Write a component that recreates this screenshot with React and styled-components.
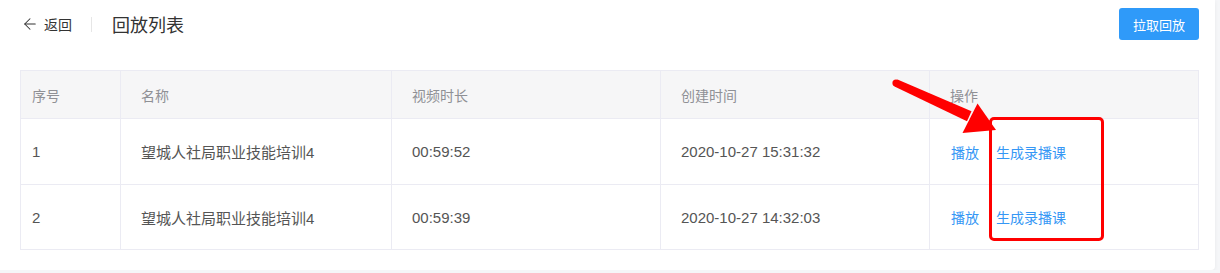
import { createGlobalStyle, styled } from "styled-components";
import { ArrowLeft } from "lucide-react";

const GlobalStyle = createGlobalStyle`
  body {
    margin: 0;
    background: #f5f6f8;
    font-family: "Liberation Sans", "Noto Sans CJK SC", sans-serif;
  }
`;

const Card = styled.div`
  position: relative;
  width: 1215px;
  box-sizing: border-box;
  padding: 8px 16px 20px 20px;
  background: #fff;
  border-radius: 0 0 4px 0;
  box-shadow: 0 1px 4px rgba(0, 0, 0, 0.06);
`;

const Header = styled.div`
  display: flex;
  align-items: center;
  height: 32px;
`;

const BackLink = styled.a`
  display: flex;
  align-items: center;
  gap: 5px;
  margin-left: 1px;
  color: #333;
  font-size: 14px;
  cursor: pointer;
`;

const Divider = styled.span`
  width: 1px;
  height: 15px;
  margin: 0 20px 0 19px;
  background: #e6e6e6;
`;

const Title = styled.h1`
  margin: 0;
  flex: 1;
  font-size: 18px;
  font-weight: 400;
  color: #333;
`;

const PrimaryButton = styled.button`
  width: 80px;
  height: 32px;
  border: none;
  border-radius: 3px;
  background: #2f9af9;
  color: #fff;
  font-family: inherit;
  font-size: 13px;
  cursor: pointer;
`;

const Table = styled.table`
  width: 100%;
  margin-top: 30px;
  border-collapse: collapse;
  table-layout: fixed;
`;

const Th = styled.th`
  height: 47px;
  padding: 0 20px;
  border: 1px solid #ebebf3;
  background: #f6f6f7;
  color: #8f9095;
  font-size: 14px;
  font-weight: 400;
  text-align: left;

  &:first-child {
    padding-left: 11px;
  }
`;

const Td = styled.td`
  height: ${(p) => p.$h}px;
  padding: 0 20px;
  border: 1px solid #ebebf3;
  color: #555;
  font-size: 15px;
  text-align: left;

  &:first-child {
    padding-left: 11px;
  }
`;

const Actions = styled.div`
  display: flex;
  gap: 17px;
  margin-left: 1px;
`;

const ActionLink = styled.a`
  color: #3597f5;
  font-size: 14px;
  cursor: pointer;
`;

const Highlight = styled.div`
  position: absolute;
  left: 989px;
  top: 117px;
  width: 109px;
  height: 118px;
  border: 3px solid #ff0000;
  border-radius: 5px;
  pointer-events: none;
`;

const Annotation = styled.svg`
  position: absolute;
  left: 0;
  top: 0;
  pointer-events: none;
`;

const rows = [
  { id: 1, name: "望城人社局职业技能培训4", duration: "00:59:52", created: "2020-10-27 15:31:32", h: 65 },
  { id: 2, name: "望城人社局职业技能培训4", duration: "00:59:39", created: "2020-10-27 14:32:03", h: 64 },
];

export default function App() {
  return (
    <>
      <GlobalStyle />
      <Card>
        <Header>
          <BackLink>
            <ArrowLeft size={18} strokeWidth={1.4} />
            返回
          </BackLink>
          <Divider />
          <Title>回放列表</Title>
          <PrimaryButton>拉取回放</PrimaryButton>
        </Header>

        <Table>
          <colgroup>
            <col style={{ width: 100 }} />
            <col style={{ width: 271 }} />
            <col style={{ width: 269 }} />
            <col style={{ width: 269 }} />
            <col />
          </colgroup>
          <thead>
            <tr>
              <Th>序号</Th>
              <Th>名称</Th>
              <Th>视频时长</Th>
              <Th>创建时间</Th>
              <Th>操作</Th>
            </tr>
          </thead>
          <tbody>
            {rows.map((row) => (
              <tr key={row.id}>
                <Td $h={row.h}>{row.id}</Td>
                <Td $h={row.h}>{row.name}</Td>
                <Td $h={row.h}>{row.duration}</Td>
                <Td $h={row.h}>{row.created}</Td>
                <Td $h={row.h}>
                  <Actions>
                    <ActionLink>播放</ActionLink>
                    <ActionLink>生成录播课</ActionLink>
                  </Actions>
                </Td>
              </tr>
            ))}
          </tbody>
        </Table>

        <Highlight />
        <Annotation width="1215" height="268" viewBox="0 0 1215 268">
          <circle cx="896" cy="83" r="3.6" fill="#ff0000" />
          <polygon points="897.5,79.6 971.5,111.2 967,121.2 894.5,86.4" fill="#ff0000" />
          <polygon points="977.5,103.5 962.5,133 996,130" fill="#ff0000" />
        </Annotation>
      </Card>
    </>
  );
}
